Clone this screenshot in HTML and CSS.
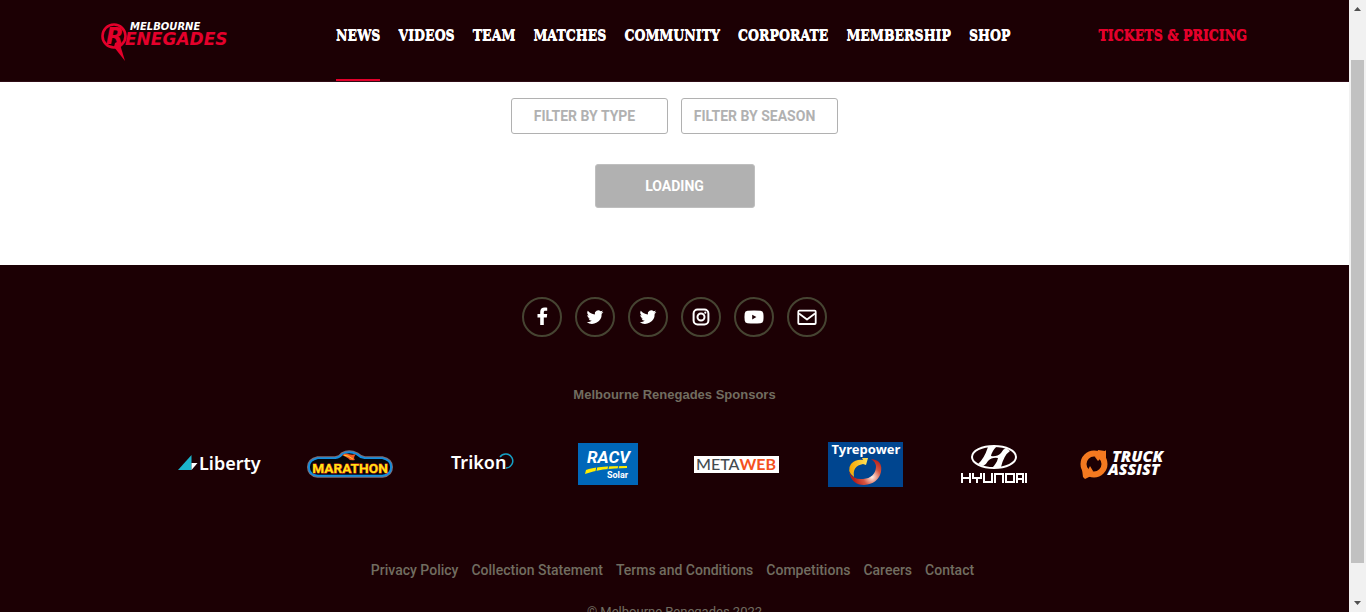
FILE: index.html
```html
<!DOCTYPE html>
<html lang="en">
<head>
<meta charset="utf-8">
<title>News | Melbourne Renegades</title>
<link rel="stylesheet" href="styles.css">
</head>
<body>
<div class="page">
  <header class="header">
    <a class="brand" href="#" aria-label="Melbourne Renegades">
      <svg class="brand-logo" viewBox="0 0 130 42" width="130" height="42">
        <circle cx="14" cy="16" r="11.5" fill="none" stroke="#e4002b" stroke-width="2.6"/>
        <path d="M15 23l4-2 6 20-11-14z" fill="#e4002b"/>
        <text class="brand-initial" x="6" y="24">R</text>
        <text class="brand-name" x="25" y="25">ENEGADES</text>
        <text class="brand-city" x="30" y="10">MELBOURNE</text>
      </svg>
    </a>
    <nav class="nav" aria-label="Main">
      <a class="nav-link active" href="#">NEWS</a>
      <a class="nav-link" href="#">VIDEOS</a>
      <a class="nav-link" href="#">TEAM</a>
      <a class="nav-link" href="#">MATCHES</a>
      <a class="nav-link" href="#">COMMUNITY</a>
      <a class="nav-link" href="#">CORPORATE</a>
      <a class="nav-link" href="#">MEMBERSHIP</a>
      <a class="nav-link" href="#">SHOP</a>
    </nav>
    <a class="tickets" href="#">TICKETS &amp; PRICING</a>
  </header>

  <main class="main">
    <div class="filters">
      <select class="filter" aria-label="Filter by type"><option>FILTER BY TYPE</option></select>
      <select class="filter" aria-label="Filter by season"><option>FILTER BY SEASON</option></select>
    </div>
    <button class="loading" type="button">LOADING</button>
  </main>

  <footer class="footer">
    <div class="social">
      <a class="social-link" href="#" aria-label="Facebook"><svg viewBox="0 0 20 20"><path d="M8.200 18v-7.600H5.500V7.100h2.700V4.900C8.200 2 9.900.5 12.600.5c1.100 0 2.100.1 2.600.2v3h-1.700c-1.400 0-1.700.6-1.700 1.600v1.800h3.400l-.4 3.300h-3V18z"/></svg></a>
      <a class="social-link" href="#" aria-label="Twitter"><svg viewBox="0 0 24 24"><path d="M22 5.900c-.7.300-1.500.5-2.400.6.900-.5 1.500-1.300 1.800-2.300-.8.500-1.700.8-2.600 1a4.100 4.100 0 0 0-7 3.700A11.700 11.700 0 0 1 3.400 4.600a4.100 4.100 0 0 0 1.300 5.500c-.7 0-1.300-.2-1.900-.5 0 2 1.400 3.700 3.300 4.100-.6.200-1.200.2-1.900.1a4.100 4.100 0 0 0 3.900 2.800A8.300 8.300 0 0 1 2 18.300 11.700 11.700 0 0 0 20 8c.8-.6 1.500-1.300 2-2.100z"/></svg></a>
      <a class="social-link" href="#" aria-label="Twitter"><svg viewBox="0 0 24 24"><path d="M22 5.900c-.7.300-1.500.5-2.400.6.900-.5 1.500-1.300 1.800-2.300-.8.500-1.700.8-2.600 1a4.100 4.100 0 0 0-7 3.700A11.700 11.700 0 0 1 3.400 4.600a4.100 4.100 0 0 0 1.300 5.500c-.7 0-1.300-.2-1.900-.5 0 2 1.400 3.700 3.300 4.100-.6.200-1.200.2-1.900.1a4.100 4.100 0 0 0 3.900 2.800A8.300 8.300 0 0 1 2 18.300 11.700 11.700 0 0 0 20 8c.8-.6 1.500-1.300 2-2.100z"/></svg></a>
      <a class="social-link" href="#" aria-label="Instagram"><svg viewBox="0 0 20 20"><g fill="none" stroke="#fff" stroke-width="2"><rect x="2.600" y="2.600" width="14.800" height="14.800" rx="4"/><circle cx="10" cy="10" r="3.500"/></g><circle cx="14.300" cy="5.700" r="1.100"/></svg></a>
      <a class="social-link" href="#" aria-label="YouTube"><svg viewBox="0 0 20 20"><path fill-rule="evenodd" d="M3.500 3.700Q10 3.100 16.500 3.700Q19 4 19.300 6.500Q19.800 10 19.300 13.500Q19 16 16.500 16.300Q10 16.900 3.500 16.300Q1 16 .7 13.500Q.2 10 .7 6.500Q1 4 3.500 3.700zM8.200 7.700v4.800l4.200-2.400z"/></svg></a>
      <a class="social-link" href="#" aria-label="Email"><svg viewBox="0 0 20 20"><g fill="none" stroke="#fff" stroke-width="1.800" stroke-linejoin="round"><rect x="1.300" y="3.700" width="17.400" height="13.300" rx="1"/><path d="M2 6.500l8 6 8-6"/></g></svg></a>
    </div>

    <h2 class="sponsors-title">Melbourne Renegades Sponsors</h2>
    <div class="sponsors">
      <a class="sponsor" href="#" aria-label="Liberty">
        <svg width="86" height="30" viewBox="0 0 86 30">
          <path d="M0 21L13.500 6v15z" fill="#1cb5cc"/><path d="M13.500 14h6l-6 7z" fill="#fff"/>
          <text class="liberty" x="21" y="21">Liberty</text>
        </svg>
      </a>
      <a class="sponsor" href="#" aria-label="Marathon">
        <svg width="86" height="34" viewBox="0 -2 88 34">
          <path d="M11 9h18q5-1 7-4 7-4 15 0 3 3 8 4h18q9 2 9 9 0 8-9 9H11q-9-1-9-9 0-7 9-9z" fill="#050608" stroke="#7c6c76" stroke-width="4"/>
          <path d="M11 9h18q5-1 7-4 7-4 15 0 3 3 8 4h18q9 2 9 9 0 8-9 9H11q-9-1-9-9 0-7 9-9z" fill="#050608" stroke="#128ddd" stroke-width="2"/>
          <path d="M36 6q3-3 7-1 3 1 7 0-3 3-1 6-5 1-7-2-3-2-6-3z" fill="#f25a22"/><path d="M38 6q4 0 9 4" stroke="#ffd52b" fill="none"/>
          <text class="marathon" x="44" y="24">MARATHON</text>
        </svg>
      </a>
      <a class="sponsor" href="#" aria-label="Trikon">
        <svg width="70" height="30" viewBox="0 0 70 30">
          <text class="trikon" x="7" y="20">Trikon</text>
          <path d="M56 8a7 7 0 1 1 6 11" fill="none" stroke="#159fc5" stroke-width="1.500"/>
        </svg>
      </a>
      <a class="sponsor" href="#" aria-label="RACV Solar">
        <svg width="60" height="42" viewBox="0 0 60 42">
          <rect width="60" height="42" fill="#0067b9"/>
          <text class="racv" x="9" y="20">RACV</text>
          <path d="M8 27Q18 23 49 23v2Q22 25 7 31z" fill="#ffec00"/><path d="M19 23l-1 5M31 22l-1 4M41 22l-1 4" stroke="#0067b9"/>
          <text class="solar" x="29" y="35">Solar</text>
        </svg>
      </a>
      <a class="sponsor" href="#" aria-label="Metaweb">
        <svg width="85" height="17" viewBox="0 0 85 17">
          <rect width="85" height="17" fill="#fff"/>
          <text class="metaweb" x="2" y="14">META<tspan class="web">WEB</tspan></text>
        </svg>
      </a>
      <a class="sponsor" href="#" aria-label="Tyrepower">
        <svg width="75" height="45" viewBox="0 0 75 45">
          <defs>
            <linearGradient id="gold"><stop stop-color="#f5a500"/><stop offset="1" stop-color="#ffe45c"/></linearGradient>
            <radialGradient id="ring" gradientUnits="userSpaceOnUse" cx="44" cy="35" r="18"><stop stop-color="#fff0e8"/><stop offset=".5" stop-color="#d65440"/><stop offset="1" stop-color="#b51f1a"/></radialGradient>
          </defs>
          <rect width="75" height="45" fill="#00458f"/>
          <text class="tyrepower" x="38" y="12">Tyrepower</text>
          <path d="M43 17Q55 18 53 30 50 42 36 43 24 43 21 30 25 38 35 37 47 36 48 25 48 20 43 17z" fill="url(#ring)"/>
          <path d="M26 35Q18 29 23 22 28 17 35 18l-1-2h6l-2 7-3-1Q24 24 26 35z" fill="url(#gold)"/>
        </svg>
      </a>
      <a class="sponsor" href="#" aria-label="Hyundai">
        <svg width="66" height="42" viewBox="0 -2 66 42">
          <ellipse cx="33" cy="12" rx="22" ry="11" fill="none" stroke="#fff" stroke-width="2"/>
          <path d="M27 2L36 1Q31 6 30 11 36 12 40 8 42 4 45 3L49 6Q43 10 40 22L31 23Q36 18 37 13 31 12 27 16 25 20 22 21L17 19Q23 14 27 2z" fill="#fff"/>
          <path d="M1 28v10M9 28v10M1 33h8M12 28v5h8v-5M16 33v5M23 28v9h8v-9M34 38v-9h8v9M45 29h8v8h-8zM56 38v-9h6v9M56 34h6M65 28v10" fill="none" stroke="#fff" stroke-width="2"/>
        </svg>
      </a>
      <a class="sponsor" href="#" aria-label="Truck Assist">
        <svg width="88" height="32" viewBox="0 -2 88 32">
          <circle cx="15" cy="14" r="10.500" fill="none" stroke="#f47920" stroke-width="6"/>
          <path d="M19 0l7 1 1-1v8l-6 1-2 2-3-4zM3 19l6 1 2-4 3 5-2 5-6 3-2-2z" fill="#f47920"/>
          <text class="truck" x="33" y="12">TRUCK</text>
          <text class="truck" x="29" y="25">ASSIST</text>
        </svg>
      </a>
    </div>

    <nav class="footer-links" aria-label="Footer">
      <a href="#">Privacy Policy</a>
      <a href="#">Collection Statement</a>
      <a href="#">Terms and Conditions</a>
      <a href="#">Competitions</a>
      <a href="#">Careers</a>
      <a href="#">Contact</a>
    </nav>
    <p class="copyright">© Melbourne Renegades 2022</p>
  </footer>
</div>
<div class="scrollbar" aria-hidden="true">
  <svg class="arrow" viewBox="0 0 7 4"><path d="M0 4h7L3.500 0z"/></svg>
  <div class="track"><div class="thumb"></div></div>
  <svg class="arrow" viewBox="0 0 7 4"><path d="M0 0h7L3.500 4z"/></svg>
</div>
</body>
</html>
```

FILE: styles.css
```css
* { box-sizing: border-box; }

body {
  margin: 0;
  height: 100vh;
  overflow: hidden;
  display: flex;
  background: #1c0004;
  font-family: Roboto, "Liberation Sans", sans-serif;
}

a { color: inherit; text-decoration: none; }

.page { flex: 1; min-width: 0; }

/* Header */
.header {
  display: flex;
  justify-content: space-between;
  height: 82px;
  padding: 0 102px 0 100px;
  background: #1c0004;
  border-bottom: 1px solid #2f0c16;
  font-family: "DejaVu Serif Condensed", "DejaVu Serif", serif;
  font-weight: 700;
  font-size: 14px;
  line-height: 70px;
  color: #fff;
  text-shadow: 0 1px 0 currentColor;
  white-space: nowrap;
}
.brand { padding-top: 20px; line-height: 0; text-shadow: none; }
.brand-logo { font-family: "DejaVu Sans", sans-serif; font-style: italic; font-weight: 700; }
.brand-initial { font-size: 23px; fill: #e4002b; }
.brand-name { font-size: 17px; fill: #e4002b; }
.brand-city { font-size: 10px; fill: #fff; }
.nav { display: flex; gap: 18px; padding-left: 18px; }
.nav-link.active { border-bottom: 2px solid #e4002b; }
.tickets { color: #e4002b; }

/* Filters */
.main {
  display: flex;
  flex-direction: column;
  align-items: center;
  gap: 30px;
  padding: 16px 0 57px;
  background: #fff;
}
.filters { display: flex; gap: 13px; }
.filter {
  appearance: none;
  width: 157px;
  height: 36px;
  padding: 0 10px 0 0;
  border: 1px solid #b1b1b1;
  border-radius: 3px;
  background: #fff;
  color: #b1b1b1;
  font: 700 14px Roboto, sans-serif;
  text-align: center;
  text-align-last: center;
}
.loading {
  width: 160px;
  height: 44px;
  border: 1px solid #bfbfbf;
  border-radius: 3px;
  background: #b1b1b1;
  color: #fff;
  font: 700 14px Roboto, sans-serif;
}

/* Footer */
.footer {
  display: flex;
  flex-direction: column;
  align-items: center;
  padding-top: 32px;
  color: #716d60;
}
.social { display: flex; gap: 13px; }
.social-link {
  display: grid;
  place-items: center;
  width: 40px;
  height: 40px;
  border: 2px solid #464432;
  border-radius: 50%;
}
.social-link svg { width: 20px; height: 20px; fill: #fff; }
.sponsors-title {
  margin: 48px 0 0;
  font: 700 13px/20px "Liberation Sans", Arial, sans-serif;
}
.sponsors {
  display: grid;
  grid-template-columns: repeat(8, 1fr);
  align-items: center;
  justify-items: center;
  width: 100%;
  max-width: 1036px;
  height: 48px;
  margin-top: 35px;
  padding-right: 5px;
}
.sponsor { display: flex; }
.sponsor text { fill: #fff; }
.liberty { font: 600 18px "Noto Sans", sans-serif; }
.sponsor .marathon { font: 700 14px Roboto, sans-serif; text-anchor: middle; fill: #ffe512; stroke: #d82a1c; stroke-width: 1px; paint-order: stroke; }
.trikon { font: 600 18px "Noto Sans", sans-serif; }
.racv { font: italic 700 17px Roboto, sans-serif; }
.solar { font: 700 9px Roboto, sans-serif; }
.sponsor .metaweb { font: 500 16px Lato, sans-serif; fill: #444b50; }
.sponsor .web { font-weight: 700; fill: #f4511e; }
.tyrepower { font: 700 13px "Noto Sans", sans-serif; text-anchor: middle; }
.truck { font: italic 800 16px "Open Sans", sans-serif; }
.footer-links {
  display: flex;
  gap: 13px;
  margin-top: 72px;
  padding-right: 4px;
  font-weight: 500;
  font-size: 14px;
  line-height: 20px;
}
.copyright { margin: 22px 0 0; font-size: 13px; line-height: 20px; }

/* Scrollbar */
.scrollbar {
  display: flex;
  flex-direction: column;
  align-items: center;
  justify-content: space-between;
  width: 17px;
  padding: 7px 0;
  background: #f1f1f1;
}
.arrow { width: 7px; height: 4px; fill: #505050; }
.track { flex: 1; width: 13px; margin: 6px 0; }
.thumb { height: 87%; margin-top: 43px; background: #c1c1c1; }
```
